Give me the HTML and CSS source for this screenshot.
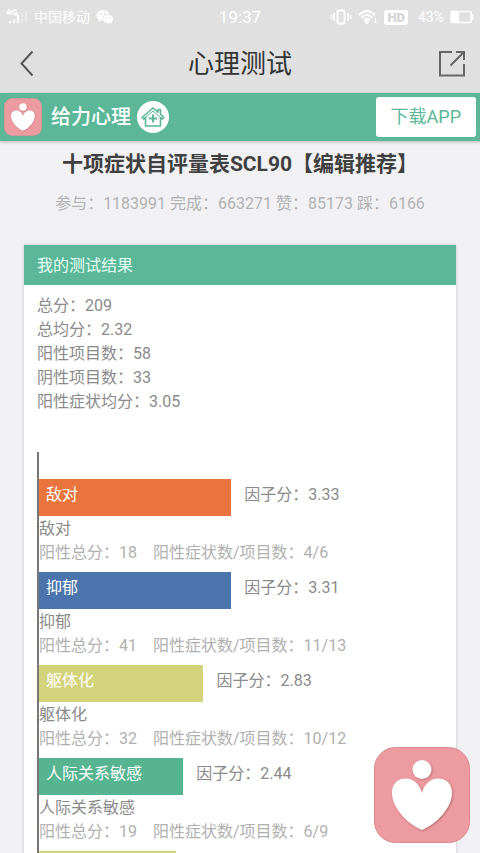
FILE: index.html
```html
<!DOCTYPE html>
<html lang="zh-CN">
<head>
<meta charset="utf-8">
<meta name="viewport" content="width=device-width, initial-scale=1">
<title>心理测试</title>
<link rel="stylesheet" href="styles.css">
</head>
<body>
<svg class="defs" aria-hidden="true">
  <symbol id="logo" viewBox="0 0 96 96">
    <rect x="0.5" y="0.5" width="95" height="95" rx="21" fill="#ec9ba0" stroke="#d8898e"/>
    <g class="logo-mark" fill="#fff">
      <circle cx="48" cy="22.500" r="9.500"/>
      <path d="M48 46C46 37 39 31.500 32 31.500C23 31.500 18 37 18 46C18 60 32 76 48 83C64 76 78 60 78 46C78 37 73 31.500 64 31.500C57 31.500 50 37 48 46Z"/>
    </g>
  </symbol>
</svg>

<div class="status">
  <div class="status-side">
    <svg width="22" height="18" viewBox="0 0 22 18" fill="none" stroke="#fff" aria-hidden="true">
      <path d="M3.500 1L1 5H5.500M4.500 2V7M10.500 2.500Q7 .5 7 4Q7 7.500 10.500 6.500V4.500H8.800" stroke-width="1.500"/>
      <path d="M4 15V13M8 15V11.500M12 15V7" stroke-width="2"/>
      <path d="M16 15V5M20 15V3" stroke-width="1.500" opacity=".4"/>
    </svg>
    <span class="carrier">中国移动</span>
    <svg width="18" height="16" viewBox="0 0 18 16" aria-hidden="true">
      <path d="M7 1C3 1 .5 3.500 .5 6.500C.5 8.300 1.500 9.700 2.800 10.700L2 13L4.800 11.600L7 12C11 12 13.500 9.500 13.500 6.500S11 1 7 1Z" fill="#fff"/>
      <path d="M12 5.500C8.800 5.500 6.500 7.500 6.500 10.200S9 14.500 12 14.500L14 14.200L16.200 15.400L15.700 13.400C16.800 12.600 17.500 11.500 17.500 10C17.500 7.500 15 5.500 12 5.500Z" fill="#fff" stroke="#e0e0e0" stroke-width=".8"/>
      <g fill="#dcdcdc"><circle cx="5" cy="5" r=".9"/><circle cx="9" cy="4.500" r=".9"/><circle cx="10.500" cy="9" r=".8"/><circle cx="14" cy="9" r=".8"/></g>
    </svg>
  </div>
  <span class="time">19:37</span>
  <div class="status-side status-right">
    <svg width="22" height="16" viewBox="0 0 22 16" fill="none" stroke="#fff" aria-hidden="true">
      <rect x="7.500" y="1.500" width="7" height="13" rx="1" stroke-width="1.800"/>
      <path d="M4 4V12M18 4V12" stroke-width="1.500"/><path d="M1.500 6V10M20.500 6V10" stroke-width="1.500"/>
    </svg>
    <svg width="20" height="16" viewBox="0 0 20 16" fill="none" stroke="#fff" stroke-width="1.800" aria-hidden="true">
      <path d="M1 6Q9 -2 17 6M3.500 8.800Q9 3 14.500 8.800M6 11.500Q9 8 12 11.500"/><circle cx="9" cy="13" r="1" fill="#fff"/>
      <path d="M17.500 9V14M16 12.500L17.500 14L19 12.500" stroke-width="1"/>
    </svg>
    <span class="hd">HD</span>
    <span class="percent">43%</span>
    <svg width="24" height="14" viewBox="0 0 24 14" aria-hidden="true">
      <rect x="1" y="1.500" width="20" height="11" rx="1" fill="none" stroke="#fff" stroke-width="1.500"/>
      <path d="M1 2H9V12H1ZM22 4.500H23.500V9.500H22Z" fill="#fff"/>
    </svg>
  </div>
</div>

<nav class="nav">
  <button class="icon-button" aria-label="返回">
    <svg width="28" height="28" viewBox="0 0 28 28" fill="none" stroke="#555" stroke-width="2"><path d="M18.500 1.500L7.500 13.500L18.500 25.500"/></svg>
  </button>
  <span class="nav-title">心理测试</span>
  <button class="icon-button" aria-label="分享">
    <svg width="28" height="28" viewBox="0 0 28 28" fill="none" stroke="#666" stroke-width="2"><path d="M14 2H2V25.500H26V14M18 2H26V10M25.500 2.500L12.500 15.500"/></svg>
  </button>
</nav>

<header class="brand">
  <svg class="brand-logo" aria-hidden="true"><use href="#logo"/></svg>
  <span class="brand-name">给力心理</span>
  <a class="home" href="#" aria-label="首页">
    <svg width="32" height="32" viewBox="0 0 32 32" fill="none" stroke="#5bb798">
      <circle cx="16" cy="16" r="16" fill="#fff" stroke="none"/>
      <path d="M16 7L5 16.500L6.500 18L8.500 16.500V25H23.500V16.500L25.500 18L27 16.500L23.500 13.200V8.500H21V11.200Z" stroke-width="1.600" stroke-linejoin="round"/>
      <path d="M8.500 16.500L16 10L23.500 16.500" stroke-width="1"/>
      <path d="M16 13.500V21.500M12 17.500H20" stroke-width="2"/>
    </svg>
  </a>
  <a class="download" href="#">下载APP</a>
</header>

<main class="page">
  <h1>十项症状自评量表SCL90【编辑推荐】</h1>
  <p class="stats">参与：1183991 完成：663271 赞：85173 踩：6166</p>

  <section class="card">
    <h2>我的测试结果</h2>
    <div class="card-body">
      <ul class="summary">
        <li>总分：209</li>
        <li>总均分：2.32</li>
        <li>阳性项目数：58</li>
        <li>阴性项目数：33</li>
        <li>阳性症状均分：3.05</li>
      </ul>
      <div class="chart">
        <div class="factor">
          <div class="bar-row"><div class="bar orange" style="width:47.6%">敌对</div><span>因子分：3.33</span></div>
          <p>敌对</p>
          <p class="detail"><span>阳性总分：18</span><span>阳性症状数/项目数：4/6</span></p>
        </div>
        <div class="factor">
          <div class="bar-row"><div class="bar blue" style="width:47.6%">抑郁</div><span>因子分：3.31</span></div>
          <p>抑郁</p>
          <p class="detail"><span>阳性总分：41</span><span>阳性症状数/项目数：11/13</span></p>
        </div>
        <div class="factor">
          <div class="bar-row"><div class="bar yellow" style="width:40.7%">躯体化</div><span>因子分：2.83</span></div>
          <p>躯体化</p>
          <p class="detail"><span>阳性总分：32</span><span>阳性症状数/项目数：10/12</span></p>
        </div>
        <div class="factor">
          <div class="bar-row"><div class="bar green" style="width:35.7%">人际关系敏感</div><span>因子分：2.44</span></div>
          <p>人际关系敏感</p>
          <p class="detail"><span>阳性总分：19</span><span>阳性症状数/项目数：6/9</span></p>
        </div>
        <div class="factor">
          <div class="bar-row"><div class="bar yellow" style="width:33.8%"></div></div>
        </div>
      </div>
    </div>
  </section>
</main>

<a class="floating" href="#" aria-label="给力心理"><svg aria-hidden="true"><use href="#logo"/></svg></a>
</body>
</html>
```
FILE: styles.css
```css
* { box-sizing: border-box; }

body {
  margin: 0;
  height: 100vh;
  display: flex;
  flex-direction: column;
  overflow: hidden;
  background: #f1f1f4;
  color: #8a8a8a;
  font: 16px/24px Roboto, "Noto Sans CJK SC", sans-serif;
}

h1, h2, p, ul { margin: 0; padding: 0; }
ul { list-style: none; }
svg { display: block; flex: none; }
a { text-decoration: none; }

.defs { position: absolute; width: 0; height: 0; }
.logo-mark { filter: drop-shadow(1px 1px 1px rgba(120, 50, 55, .4)); }

.status {
  display: grid;
  grid-template-columns: 1fr auto 1fr;
  align-items: center;
  flex: none;
  height: 34px;
  padding: 0 6px;
  background: #e0e0e0;
  color: #fff;
}
.status-side { display: flex; align-items: center; gap: 6px; }
.status-right { justify-content: flex-end; }
.carrier, .percent { font-size: 14px; }
.time { font-size: 17px; }
.percent { margin-left: 4px; }
.hd {
  padding: 0 3px;
  border-radius: 3px;
  background: #fff;
  color: #d4d4d4;
  font-size: 13px;
  line-height: 15px;
  font-weight: 900;
}

.nav {
  display: flex;
  align-items: center;
  justify-content: space-between;
  flex: none;
  height: 59px;
  padding: 0 14px;
  background: #e0e0e0;
}
.nav-title { color: #333; font-size: 26px; line-height: 36px; }
.icon-button {
  display: flex;
  width: 28px;
  padding: 0;
  border: 0;
  background: none;
}

.brand {
  display: flex;
  align-items: center;
  flex: none;
  height: 48px;
  padding: 0 4px;
  background: #5bb798;
  box-shadow: 0 1px 3px rgba(0, 0, 0, .25);
  z-index: 1;
}
.brand-logo { width: 38px; height: 38px; }
.brand-name {
  margin: 0 6px 0 9px;
  color: #fff;
  font-size: 20px;
  font-weight: 500;
}
.download {
  margin-left: auto;
  padding: 0 14px;
  border: 0 solid #fff;
  border-width: 0 1px;
  border-radius: 3px;
  background: #fff;
  color: #5bb798;
  font-size: 18px;
  line-height: 40px;
}

.page {
  flex: 1;
  min-height: 0;
  overflow-y: auto;
  scrollbar-width: none;
  padding: 8px 24px 0;
}
h1 {
  color: #404040;
  font-size: 21px;
  line-height: 30px;
  font-weight: 700;
  text-align: center;
  white-space: nowrap;
}
.stats {
  margin-top: 13px;
  color: #b2b2b2;
  text-align: center;
  white-space: nowrap;
}

.card {
  margin-top: 29px;
  background: #fff;
  box-shadow: 0 0 3px rgba(0, 0, 0, .2);
}
h2 {
  padding: 1px 13px 0;
  background: #5bb798;
  color: #e4fff5;
  font-size: 16px;
  line-height: 39px;
  font-weight: 400;
}
.card-body { padding: 9px 13px; }

.chart {
  margin-top: 38px;
  padding-top: 27px;
  border-left: 2px solid #777;
}
.factor { margin-bottom: 7px; }
.bar-row { display: flex; gap: 13px; height: 38px; line-height: 32px; }
.bar { height: 37px; padding-left: 7px; color: #fff; white-space: nowrap; }
.orange { background: #ea743e; }
.blue { background: #4b74ac; }
.yellow { background: #d3d37c; }
.green { background: #57b491; }
.detail { display: flex; gap: 16px; color: #b0b0b0; }

.floating { position: fixed; right: 10px; bottom: 10px; z-index: 2; }
.floating svg { width: 96px; height: 96px; }
```
